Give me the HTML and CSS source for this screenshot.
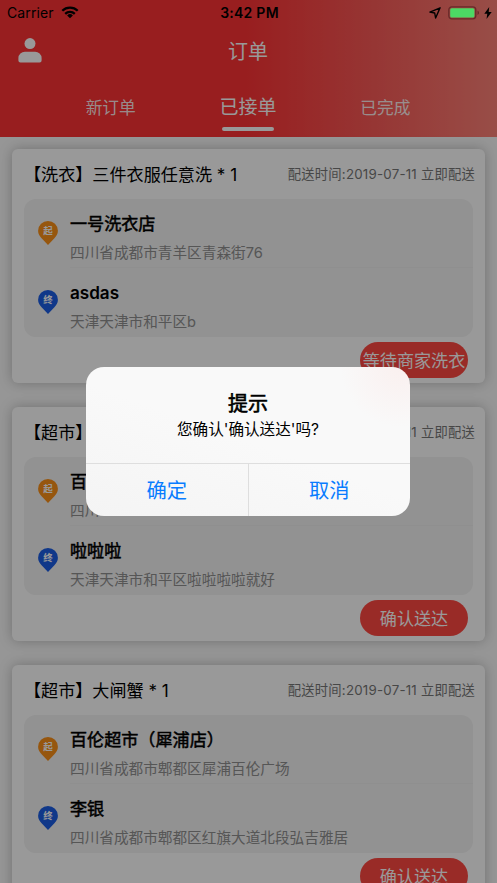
FILE: index.html
```html
<!DOCTYPE html>
<html lang="zh-CN">
<head>
<meta charset="utf-8">
<title>订单</title>
<link rel="stylesheet" href="styles.css">
</head>
<body>
<svg class="defs" width="0" height="0"><defs>
<symbol id="pin" viewBox="0 0 20 24"><path d="M10 0a9.9 9.9 0 0 0-9.9 9.8c0 3 1.4 5.400 3.500 7.500L10 24l6.400-6.700c2.100-2.100 3.500-4.500 3.500-7.500A9.900 9.900 0 0 0 10 0z"/></symbol>
</defs></svg>
<div class="screen">
  <header class="header">
    <div class="nav">
      <svg class="user" width="24" height="25" viewBox="0 0 24 25"><circle cx="12" cy="5.600" r="5.500"/><path d="M.4 22.500v-2.500a6.500 6.500 0 0 1 6.500-6.300h10.200a6.500 6.500 0 0 1 6.500 6.300v2.500q0 2-2 2H2.400q-2 0-2-2z"/></svg>
      <h1 class="title">订单</h1>
    </div>
    <nav class="tabs">
      <span class="tab">新订单</span>
      <span class="tab active">已接单</span>
      <span class="tab">已完成</span>
    </nav>
  </header>
  <main class="list">
    <article class="card">
      <div class="head"><span class="goods">【洗衣】三件衣服任意洗 * 1</span><span class="time">配送时间:2019-07-11 立即配送</span></div>
      <div class="route">
        <div class="stop"><div class="pin start"><svg width="20" height="24"><use href="#pin"/></svg><b>起</b></div><div class="place"><div class="name">一号洗衣店</div><div class="addr">四川省成都市青羊区青森街76</div></div></div>
        <div class="stop"><div class="pin end"><svg width="20" height="24"><use href="#pin"/></svg><b>终</b></div><div class="place"><div class="name latin">asdas</div><div class="addr">天津天津市和平区b</div></div></div>
      </div>
      <div class="action">等待商家洗衣</div>
    </article>
    <article class="card">
      <div class="head"><span class="goods">【超市】</span><span class="time">配送时间:2019-07-11 立即配送</span></div>
      <div class="route">
        <div class="stop"><div class="pin start"><svg width="20" height="24"><use href="#pin"/></svg><b>起</b></div><div class="place"><div class="name">百</div><div class="addr">四川</div></div></div>
        <div class="stop"><div class="pin end"><svg width="20" height="24"><use href="#pin"/></svg><b>终</b></div><div class="place"><div class="name">啦啦啦</div><div class="addr">天津天津市和平区啦啦啦啦就好</div></div></div>
      </div>
      <div class="action">确认送达</div>
    </article>
    <article class="card">
      <div class="head"><span class="goods">【超市】大闸蟹 * 1</span><span class="time">配送时间:2019-07-11 立即配送</span></div>
      <div class="route">
        <div class="stop"><div class="pin start"><svg width="20" height="24"><use href="#pin"/></svg><b>起</b></div><div class="place"><div class="name">百伦超市（犀浦店）</div><div class="addr">四川省成都市郫都区犀浦百伦广场</div></div></div>
        <div class="stop"><div class="pin end"><svg width="20" height="24"><use href="#pin"/></svg><b>终</b></div><div class="place"><div class="name">李银</div><div class="addr">四川省成都市郫都区红旗大道北段弘吉雅居</div></div></div>
      </div>
      <div class="action">确认送达</div>
    </article>
  </main>
  <div class="overlay">
    <div class="dialog">
      <div class="content"><div class="dialog-title">提示</div><div class="message">您确认'确认送达'吗?</div></div>
      <div class="buttons"><span class="button">确定</span><span class="button">取消</span></div>
    </div>
  </div>
  <div class="status">
    <div class="carrier"><span>Carrier</span>
      <svg width="18" height="13" viewBox="0 0 18 13"><g fill="none" stroke="#000" stroke-width="2.300"><path d="M1.300 4.700a11 11 0 0 1 15.400 0"/><path d="M4.200 7.900a6.900 6.900 0 0 1 9.600 0"/></g><path d="M9 12.300 6.100 9.500a4.200 4.200 0 0 1 5.800 0z"/></svg>
    </div>
    <div class="clock">3:42 PM</div>
    <div class="power">
      <svg width="12" height="12" viewBox="0 0 12 12"><path d="M11.100.8.900 5.100l4.800.9.900 5z" fill="none" stroke="#000" stroke-width="1.400" stroke-linejoin="round"/></svg>
      <svg class="battery" width="32" height="14" viewBox="0 0 32 14"><rect x=".8" y=".8" width="27" height="12" rx="3" fill="none" stroke="#682a29" stroke-width="1.300"/><rect x="2.200" y="2.200" width="24.200" height="9.200" rx="1.500" fill="#4cd964"/><path d="M29.500 4.700c2 .7 2 3.500 0 4.200z" fill="#682a29"/></svg>
      <svg width="8" height="12" viewBox="0 0 8 12"><path d="M5.200 0 .3 6.700h3L2.500 12 7.700 5h-3z"/></svg>
    </div>
  </div>
</div>
</body>
</html>
```
FILE: styles.css
```css
* { box-sizing: border-box; }
body {
  margin: 0;
  font-family: Inter, "Noto Sans CJK SC", sans-serif;
  color: #000;
}
.defs { position: absolute; }
.screen {
  position: relative;
  width: 497px;
  height: 883px;
  overflow: hidden;
  background: #fafafa;
}
.header {
  height: 137px;
  padding-top: 24px;
  color: #fff;
  background: linear-gradient(90deg, #fe3234 0%, #fe3234 49%, #fb5a57 75%, #fe8278 100%);
}
.nav {
  display: grid;
  grid-template-columns: 1fr auto 1fr;
  align-items: center;
  height: 52px;
  padding: 0 19px 0 18px;
}
.user { fill: #fff; }
.title {
  margin: 0;
  font-size: 20px;
  font-weight: 400;
}
.tabs {
  display: flex;
  justify-content: center;
  height: 61px;
  padding: 0 43px 0 42px;
}
.tab {
  width: 137.500px;
  line-height: 64px;
  text-align: center;
  font-size: 16.700px;
  color: rgba(255, 255, 255, .9);
}
.active {
  display: flex;
  flex-direction: column;
  align-items: center;
  font-size: 19px;
  color: #fff;
}
.active::after {
  content: "";
  width: 52px;
  height: 4px;
  margin-top: -13px;
  border-radius: 2px;
  background: #fff;
}
.list {
  display: flex;
  flex-direction: column;
  gap: 24px;
  padding: 12px;
}
.card {
  display: flex;
  flex-direction: column;
  flex: none;
  height: 234px;
  padding: 0 12px;
  border-radius: 6px;
  background: #fff;
  box-shadow: 0 0 13px rgba(0, 0, 0, .25);
}
.head {
  display: flex;
  align-items: center;
  justify-content: space-between;
  height: 50px;
  margin-right: -2px;
  padding-bottom: 2px;
}
.goods { font-size: 17.100px; }
.time {
  font-size: 13.300px;
  letter-spacing: .22px;
  color: #777;
}
.route {
  height: 138px;
  border-radius: 12px;
  background: #f3f3f3;
}
.stop {
  display: flex;
  height: 69px;
}
.pin {
  position: relative;
  width: 20px;
  height: 24px;
  margin: 22px 12px 0 14px;
}
.pin svg { display: block; }
.pin b {
  position: absolute;
  inset: 0 0 4px;
  text-align: center;
  font-size: 9.500px;
  line-height: 20px;
  color: #fff;
}
.start { fill: #fb9018; }
.end { fill: #1c5ee4; }
.place { flex: 1; padding-top: 12px; }
.stop:first-child .place { border-bottom: 1px solid #efefef; }
.name {
  height: 27px;
  line-height: 26px;
  font-size: 17.100px;
  font-weight: 400;
  -webkit-text-stroke: .5px #000;
}
.latin {
  font-weight: 600;
  -webkit-text-stroke: 0;
}
.addr {
  line-height: 30px;
  font-size: 14.650px;
  color: #8f8f8f;
}
.action {
  align-self: flex-end;
  width: 108px;
  height: 36px;
  margin: 5px 5px 0 0;
  border-radius: 18px;
  line-height: 37px;
  text-align: center;
  font-size: 17.100px;
  white-space: nowrap;
  color: #fff;
  background: #ff4841;
}
.overlay {
  position: absolute;
  inset: 0;
  display: flex;
  align-items: center;
  justify-content: center;
  padding-right: 1px;
  background: rgba(0, 0, 0, .4);
}
.dialog {
  width: 324px;
  height: 149px;
  border-radius: 18px;
  background: radial-gradient(circle at 97% 0, #faf0ef 0, rgba(249, 249, 249, 0) 60px), linear-gradient(20deg, #f4f4f4, #f9f9f9 50%);
  text-align: center;
}
.content { height: 96px; padding-top: 24px; }
.dialog-title {
  line-height: 27px;
  font-size: 20px;
  font-weight: 400;
  -webkit-text-stroke: .6px #000;
}
.message {
  line-height: 24px;
  font-size: 15.600px;
}
.buttons {
  display: flex;
  height: 53px;
  border-top: 1px solid #dedede;
}
.button {
  flex: 1;
  line-height: 54px;
  font-size: 20.300px;
  color: #087cff;
}
.button + .button { border-left: 1px solid #dedede; }
.status {
  position: absolute;
  inset: 0 0 auto;
  display: grid;
  grid-template-columns: 1fr auto 1fr;
  align-items: center;
  height: 25px;
  padding: 0 5px 0 7px;
  font-size: 14px;
}
.carrier, .power { display: flex; align-items: center; }
.carrier { gap: 7px; letter-spacing: .1px; }
.clock { font-weight: 600; letter-spacing: .25px; }
.power { justify-content: flex-end; }
.battery { margin: 0 4px 0 7px; }
```
